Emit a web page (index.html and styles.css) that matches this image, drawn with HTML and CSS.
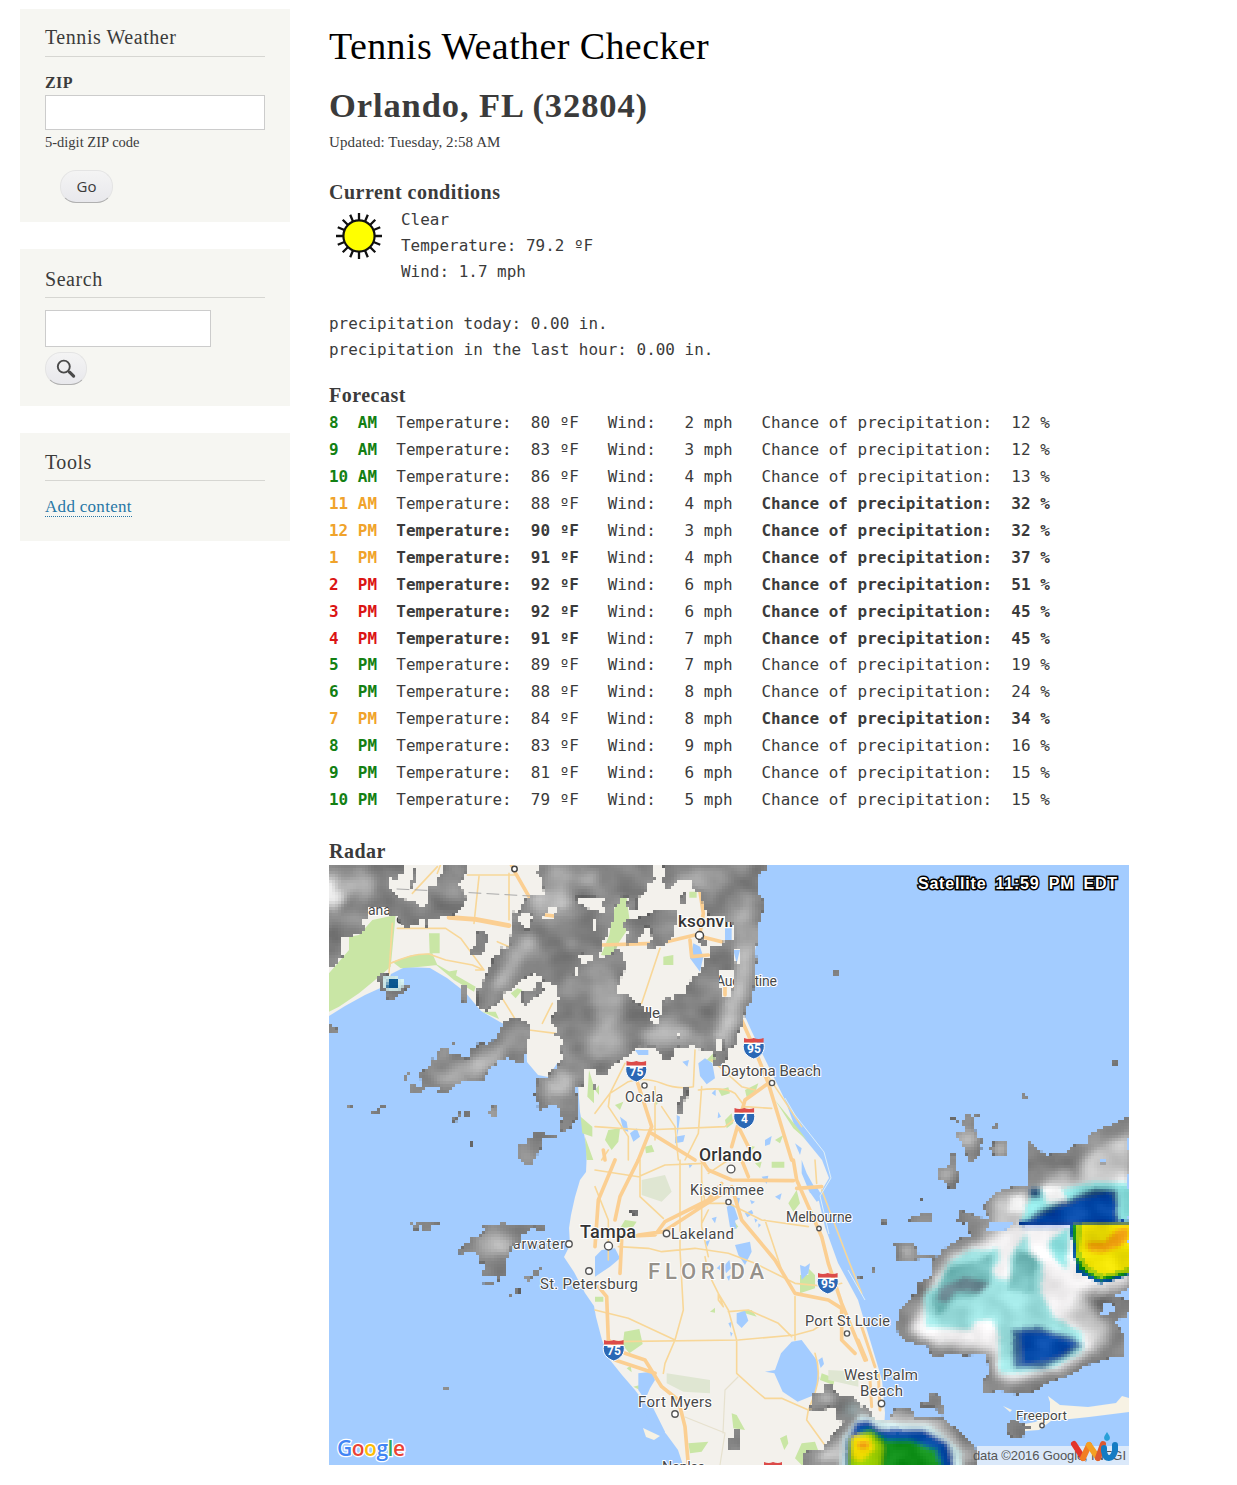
FILE: index.html
```html
<!DOCTYPE html>
<html lang="en">
<head>
<meta charset="utf-8">
<title>Tennis Weather Checker</title>
<link rel="stylesheet" href="styles.css">
</head>
<body>
<div class="page">
<aside class="sidebar">
  <section class="block block-zip">
    <h2>Tennis Weather</h2>
    <label class="zip-label" for="zip">ZIP</label>
    <input class="field" id="zip" type="text">
    <p class="hint">5-digit ZIP code</p>
    <button class="pill go" type="button">Go</button>
  </section>
  <section class="block block-search">
    <h2>Search</h2>
    <input class="field field-search" type="text" aria-label="Search">
    <button class="pill find" type="button" aria-label="Search">
      <svg width="20" height="20" viewBox="0 0 20 20" fill="none" stroke="#4a4a4a"><circle cx="7.8" cy="7.6" r="6" stroke-width="1.9"/><path d="M12 12l2 2" stroke-width="2"/><path d="M13.6 13.2l4 3.9" stroke-width="3.2" stroke-linecap="round"/></svg>
    </button>
  </section>
  <section class="block block-tools">
    <h2>Tools</h2>
    <a class="link" href="#">Add content</a>
  </section>
</aside>
<main class="content">
  <h1>Tennis Weather Checker</h1>
  <h2 class="place">Orlando, FL (32804)</h2>
  <p class="updated">Updated: Tuesday, 2:58 AM</p>
  <h3>Current conditions</h3>
  <div class="current">
    <svg class="sun" width="48" height="48" viewBox="-24 -24 48 48"><g stroke="#111" stroke-width="2.3"><path id="ray" d="M0-23V23M-23 0H23"/><use href="#ray" transform="rotate(22.5)"/><use href="#ray" transform="rotate(45)"/><use href="#ray" transform="rotate(67.5)"/></g><circle r="15.6" fill="#ff0" stroke="#111" stroke-width="2.2"/></svg>
    <div class="mono">Clear<br>Temperature: 79.2 ºF<br>Wind: 1.7 mph</div>
  </div>
  <div class="mono rain">precipitation today: 0.00 in.<br>precipitation in the last hour: 0.00 in.</div>
  <h3>Forecast</h3>
  <div class="mono forecast">
<div><b class="good">8  AM</b>  Temperature:  80 ºF   Wind:   2 mph   Chance of precipitation:  12 %</div>
<div><b class="good">9  AM</b>  Temperature:  83 ºF   Wind:   3 mph   Chance of precipitation:  12 %</div>
<div><b class="good">10 AM</b>  Temperature:  86 ºF   Wind:   4 mph   Chance of precipitation:  13 %</div>
<div><b class="fair">11 AM</b>  Temperature:  88 ºF   Wind:   4 mph   <b>Chance of precipitation:  32 %</b></div>
<div><b class="fair">12 PM</b>  <b>Temperature:  90 ºF</b>   Wind:   3 mph   <b>Chance of precipitation:  32 %</b></div>
<div><b class="fair">1  PM</b>  <b>Temperature:  91 ºF</b>   Wind:   4 mph   <b>Chance of precipitation:  37 %</b></div>
<div><b class="bad">2  PM</b>  <b>Temperature:  92 ºF</b>   Wind:   6 mph   <b>Chance of precipitation:  51 %</b></div>
<div><b class="bad">3  PM</b>  <b>Temperature:  92 ºF</b>   Wind:   6 mph   <b>Chance of precipitation:  45 %</b></div>
<div><b class="bad">4  PM</b>  <b>Temperature:  91 ºF</b>   Wind:   7 mph   <b>Chance of precipitation:  45 %</b></div>
<div><b class="good">5  PM</b>  Temperature:  89 ºF   Wind:   7 mph   Chance of precipitation:  19 %</div>
<div><b class="good">6  PM</b>  Temperature:  88 ºF   Wind:   8 mph   Chance of precipitation:  24 %</div>
<div><b class="fair">7  PM</b>  Temperature:  84 ºF   Wind:   8 mph   <b>Chance of precipitation:  34 %</b></div>
<div><b class="good">8  PM</b>  Temperature:  83 ºF   Wind:   9 mph   Chance of precipitation:  16 %</div>
<div><b class="good">9  PM</b>  Temperature:  81 ºF   Wind:   6 mph   Chance of precipitation:  15 %</div>
<div><b class="good">10 PM</b>  Temperature:  79 ºF   Wind:   5 mph   Chance of precipitation:  15 %</div>
  </div>
  <h3>Radar</h3>
  <svg class="radar" width="800" height="600" viewBox="329 865 800 600">
    <defs>
      <filter id="cells" filterUnits="userSpaceOnUse" x="329" y="865" width="800" height="600" color-interpolation-filters="sRGB">
        <feTurbulence type="fractalNoise" baseFrequency=".035 .04" numOctaves="2" seed="8" result="n"/>
        <feDisplacementMap in="SourceGraphic" in2="n" scale="3" xChannelSelector="R" yChannelSelector="G" result="d"/>
        <feColorMatrix in="n" type="matrix" values="1 0 0 0 0 1 0 0 0 0 1 0 0 0 0 0 0 0 0 1" result="g"/>
        <feComposite in="d" in2="g" operator="arithmetic" k1="0" k2="1" k3=".28" k4="-.14" result="t"/>
        <feComposite in="t" in2="d" operator="in" result="s"/>
        <feFlood x="330" y="866" width="1" height="1" flood-color="#000" result="dot"/>
        <feOffset in="dot" dx="0" dy="0" x="329" y="865" width="3" height="3" result="cell"/>
        <feTile in="cell" result="grid"/>
        <feComposite in="s" in2="grid" operator="in"/>
        <feMorphology operator="dilate" radius="1"/>
        <feComponentTransfer><feFuncA type="linear" slope="4" intercept="-1"/></feComponentTransfer>
        <feGaussianBlur stdDeviation=".6"/>
      </filter>
      <filter id="soft"><feGaussianBlur stdDeviation="14"/></filter>
      <filter id="rim"><feGaussianBlur stdDeviation="7"/></filter>
      <filter id="puff"><feGaussianBlur stdDeviation="5"/></filter>
      <filter id="mapsoft"><feGaussianBlur stdDeviation=".35"/></filter>
      <path id="storm" d="M505-60V75L430 85 390 110 370 140 390 180 300 150 285 185 325 190 330 230 300 235 245 270 235 290 170 280 165 250H100L105 305 220 295 215 350 170 370 165 400 120 450 105 510 140 545 205 560 215 590 380 585 385 645 365 665 370 700 410 690 470 705 520 695 560 670 630 645 690 610 790 590V520L765 485 820 470V420L760 410 820 380V-140L765-110 730-100 690-75V-50L650-50 620-25 560-15 530-35Z"/>
      <path id="squall" d="M-170 915V875L-115 870-95 840-60 800 0 745 50 780 85 780 100 745H150L165 775H250L320 830 350 870V915Z"/>
      <mask id="cover" maskUnits="userSpaceOnUse" x="329" y="865" width="800" height="600">
        <g transform="translate(329 860) scale(.33333)" fill="#fff">
          <path d="M0 0H180V80L190 95 210 115 265 125V135H300V80H320V60L345 40V0H415V25L400 60 390 75 400 90 415 120 390 150 370 165H335V180H300V200H285V175H265V190H240V200H225L205 175V165H180V140H120L115 180H105V210L90 225H75L60 235 35 230V270L45 290 30 300 15 325H0Z"/>
          <path d="M180 10h45v30l-15 5v13l-20 5-10-15zM252 25h10v35l-5 20h-14v-18l9-5zM0 485l28 25-8 12H0zM425 265l15-10v-30l10-15h15l5 10 10 5v20l-15 15v15l-20 8-20-5zM395 370l25 15-12 52-8-5zM142 350l20-8 30 2 30 15v12h25v12l-22 8v12l-20 5-10 10h-20l-5-20-20-8z"/>
          <path d="M630 0L625 40 640 60 645 105 605 105 580 125 575 150 550 155 555 175 545 190 550 210 540 240 545 260 525 265 510 260V285L490 290V310L475 320 480 335 465 350 460 385 440 390 445 400V440L480 455V445L510 425 520 420V400L550 390 565 370 590 360V350L605 350 610 340 625 345 640 350V365L660 365 665 375 685 385V405L690 420 680 440 685 455 670 465 668 490 685 500 680 530 700 535V550L690 560 700 570V595L690 610 680 625H660L655 650 625 655V675L615 695 620 720 630 755 660 740H690V765L700 780 692 800 700 820 725 805 728 790 745 775 750 755V720L735 685H760L765 660 770 630 798 625V645H838L840 630 858 610 880 600 908 580 935 560 965 565 995 580 998 600H1028L1035 585V565L1048 560 1128 570 1140 590 1155 615H1178L1198 590V570L1225 550 1230 510 1245 490 1248 450 1268 430 1273 400 1278 330 1285 300 1278 270 1288 230V200L1303 150V120L1288 100V70L1293 35H1318V0Z"/>
          <path d="M240 670L275 680V660L270 640 300 620 310 595 322 600 320 570 335 580 340 565H362V582H390V595H420V565L445 560V550H470L505 530 510 510 520 500V490L535 478 560 475 585 480 605 495 608 530 595 540V580L585 590 582 610H560L550 595H540L535 580 530 600H505L500 615 480 625 475 640 465 650V665H405L380 675 360 700H325L330 685 290 680 280 698H245ZM580 395h35l5-25 20-10 5 40-30 12-25 25-10-8zM475 758l10-8 5-12 15 2 3 28-15 5zM565 850h30v-15l15-5v-15l38-2v14h40v10h-48v25l-10 8-10 30h-50z"/>
          <path d="M52 731h16v14H52zM148 731h20v16h-14v14h-31v-9h20zM366 770h17v15h-17zM405 757h15v10h-15zM420 842h8v16h-8zM370 548h9v10h-9zM232 635h10v8h-10zM222 648h15v12h-15zM388 757h8v11h-8z"/>
        </g>
        <g transform="translate(595 860) scale(.33333)">
          <path d="M180 0H198V20H208V40L202 60 215 90 235 85V70H245V58H290V80L300 100H320V120L330 150 345 170 395 172V190H415V240L380 245V258H345V290L335 300 325 300V325L310 345H290L285 370 270 375V400L240 402V415L215 410 200 430 198 460 190 470V490H175V480H160V460L145 450V435L120 430 105 405H65V385L78 370 80 345 92 330 98 310 85 295V275L60 262 50 285 30 290V300H10V285L20 270V250L38 230 45 200 60 180V140L75 130 80 110H98V120L95 140 110 152H125V115L150 100H160V75L180 60 175 40Z"/>
          <path d="M-60 110H0V118L30 110V122L15 130 30 145V158H15V148H-15L-30 140-50 125ZM-220 158h25l12 10-15 25V208h-14v-10l-20-15zM-152 160l12-2-2-15 30-5 2 12-15 25h-27zM-48 285l10-4 35 5v12l-20 5-10 18-10-18zM-8 180h8v32h-8zM-60 340l5-20 5 5v20h-14zM375 327h45v25l-13 55h-25v-20l-10-5zM417 270h20l-3 40h-12zM245 518h10v14h-10zM285 555h12v30h-12zM335 575h20l5 20-20 10zM160 560h20l8 30-28-5zM360 540h25v30h-22z"/>
          <g fill="#fff"><path d="M80 195L95 180 130 180V168H155L175 150H250V190L240 200V220L220 240 210 255 185 258 182 270H160V245L170 240 168 200H150L148 220 130 235V245L92 255V235L105 215ZM258 110l5-10h12l2 15-8 15h-12zM115 75h20l8 20-18 20h-10zM310 240l10-6 16 8 2 15-18 5z"/>
          <path d="M262 678h16v35h-8l-8 47h-18v-25l12-10zM712 330h21v20h-21zM-5 675H5v12h-10z"/></g>
        </g>
        <g transform="translate(860 860) scale(.33333)" fill="#fff"><path d="M270 775h18l15 15 12-22h25v35l12 15v15h16v12l-8 10 2 13-12 32-20 6-12-25v-15l-15-10v-15l-12-10v-15h20l5-15-35-20zM345 758h14v10h-14zM398 792h18v12h-18zM400 840h45v50h-45v-12l-12-8v-10l12-3zM268 890h15v15h-15zM488 705h16v14h-16zM752 602h16v18h-16z"/></g>
        <g transform="translate(329 1160) scale(.33333)" fill="#fff"><path d="M240 189h92v7h-22v14h-32v-12h-8v11h-15v-12zM455 192H645V212H622V198L595 212V222H575V250H560L545 262V280L530 295 525 330 530 345H455V333L470 325 465 305 450 305V285L430 275 405 280V290L390 280V265L405 260V245H425V230L460 225 465 210ZM465 362h30v15h-33zM502 350h12v12h-12zM590 350h18v15h-18zM612 333h18v14h-18zM630 318h12v14h-12zM555 387h14v12h-14zM540 401h8v10h-8zM345 678h13v13h-13zM575 0h40v12h-25z"/></g>
        <g transform="translate(595 1160) scale(.33333)" fill="#fff"><path d="M100 153h26v14h-12l-6-8zM402 835h12v-26h18v26l6 5v28h-36zM655 695h30v-22h30v18l20 15h45v15l15 5v25h-15l20 25-20 10-60-2v-35l-20-10-20 12h-28l-8-8zM785 345h15v14h-15z"/></g>
        <g transform="translate(860 1160) scale(.33333)" fill="#fff">
          <use href="#storm"/><use href="#squall"/>
          <path d="M230 28l20-5 20-10V-20h20V15l-2 10 10 10v32h-13v18l-20 5v-15l-15-12-20-10zM150 165l30 5 5-12h32v32h-70zM64 177h19v14H64zM37 328h12v15H37zM184 114h8v9h-8zM205 695l20 5 20 15v15l10 10-2 30-15-10-15-20h-40v-10l20-2zM435 795l25-20 35 20h20v15h-20l-5 15-25 14-20-17zM0 740l20-3 20 30H0zM320-5h20V5h-15z"/>
          <g fill="#000"><path d="M385 190h75l-30 24h-45zM725 435l10-5 25 3 8 29h-45zM720 0h20v10h-20z"/></g>
        </g>
      </mask>
    </defs>
    <rect x="329" y="865" width="800" height="600" fill="#a3ccff"/>
    <g filter="url(#mapsoft)">
      <path fill="#f3f1ec" d="M329 865H755L757 940 743 1012 752 1032 762 1053 785 1100 795 1127 822 1160 829 1178 818 1197 825 1227 838 1263 858 1300 873 1350 882 1380 885 1413 882 1465H683L678 1450 667 1435 655 1420 652 1402 647 1406 635 1390 622 1375 610 1360 602 1340 596 1317 594 1306 585 1293 574 1272 564 1257 570 1245 569 1228 571 1215 575 1197 580 1180 586 1172 587 1150 580 1112 578 1085 560 1090 558 1062 548 1077 538 1075 527 1062 526 1035 500 1022 481 1011 465 992 447 978 430 968 405 967 391 974 387 985 365 995 345 1006 329 1016Z"/>
      <path fill="#f7f2e4" d="M1050 1402l-2-6 12 9 28 2 28-4 6-7 7 2v14l-40 5-38 4-12 9-14 1-6-6 16-3 15-6zM643 1428l17 8-6 4-8-3zM1003 1406l9 4-2 2z"/>
      <g fill="#c9e6a5" transform="translate(329 860) scale(.33333)"><path d="M130 180L200 165 190 270 185 320 150 350 90 400 30 440 0 455V340L60 270V230L90 225ZM190 305l60-20 60-5 15 35-50 5-60 5zM300 220h32v60h-30zM355 335l30-5-5 20zM310 305l130 75-5 15-60-35zM460 455h40l10 22zM545 400l20-15 15 5-20 25zM780 630l15 50v50l-20-20zM755 770l35 30v30l-30-10zM768 830l25 70h-20z"/></g>
      <g fill="#c9e6a5" transform="translate(595 860) scale(.33333)"><path d="M75 105l20 10 8 60-10 40-20 30-20 45-35-5 25-60 10-65zM205 290l30-5v30h-30zM283 95h22v18h-22zM40 810l35-5-5 40-20 25-20-30zM390 780l20-20 5 30-20 15zM450 690l40-20-10 30-25 12zM370 690l30-8 5 18-25 8zM455 855l25 5-18 20zM540 840l25-15-10 25zM540 720l65 80 30 40-40-35zM0 690l12-15V705zM60 735l25-10-10 25zM335 600l20-20 15 35zM150 860l20-5 8 20-25 5zM175 720l20-3-10 18zM180 560h35l-10 20z"/></g>
      <g fill="#c9e6a5" transform="translate(595 1160) scale(.33333)"><path d="M88 515l45-8 10 45-40 28-20-25zM615 345h25v-20l20 20v40l-45 15zM410 760l15 5 25 45-35-5zM555 835l20-10 5 25-12 20zM620 850l40-5 20 55-60 15-20-20zM700 850l25-25 5 40-30 10zM280 850l60-5-20 30-35 5zM680 640l40 15-5 20-40-15zM435 455l35-5 15 20zM580 130l25-40 10 40-20 25zM410 175l20 25-15 10zM90 180l35 5-10 15-40 5zM530 5h38v18h-38zM480 10l20-5-5 20zM345 455l15-12v15zM95 625l12-8 3 20zM115 680l20-5 10 20zM0 410h25v15H0z"/></g>
      <g fill="#dfe6d2" transform="translate(595 1160) scale(.33333)"><path d="M140 60l70-15 20 50-30 30-60-20zM215 640l130 20v40l-80-5-50-25zM700 630l90 5v45l-90-20z"/></g>
      <g fill="#a3ccff">
        <g transform="translate(595 860) scale(.33333)"><path d="M310 610l20-15 22 15 8 45-25 18-20-25zM75 770l20 15 5 30-15-5zM105 820l20-15 10 25-20 15zM240 830l30-5-5 20-25 5zM245 765l10 5-8 60zM510 840l20-12-5 25-15 5zM600 850l20 15-5 20zM370 755l8 15-10 5zM295 250l20 10 10 30-10 45-30-40zM262 605l20-5-5 20zM415 270h20l-10 40zM390 205h20v35h-20zM350 700l12-12v20zM120 570h40v15h-30z"/></g>
        <g transform="translate(595 1160) scale(.33333)"><path d="M590 545l30-5 45 60 8 55-15 50-50 20-45-30-25-55-28-5 30-5 18-50zM425 460l25-8 10 30-20 22-15-15zM395 140l20-8 15 45-10 5 5 25-20-5zM415 110l20 5-5 20zM450 160l20-10 5 10-18 12zM478 175l10 5-7 8zM420 255l45-10 5 30-20 40-20-30zM385 320l18-20 5 25-15 15zM365 325l10-10v15zM395 350l12-5-5 18zM330 245l15-5-8 20zM615 315l15 5 15-10-5 30-20 20zM0 290l20-20 40-5 15 30-30 25-45 30zM130 640l40-5 10 25-15 25-15 35-20-30zM140 740l30-5 40 80-10 15-40-50zM670 600l12-8 5 20-10 12zM620 0l15 40 25 45-15 15-25-60zM640 90l25-10 20 35-20 10zM500 50l20-3-5 25zM540 110l20-10-5 20zM350 175l15-5-5 20zM465 120l15 5-10 8zM280 10l12 5-8 10zM490 190l8 5-8 8zM400 490l10-5-3 20zM405 515l8 5-5 10z"/></g>
      </g>
      <g fill="none" stroke-linejoin="round" stroke-linecap="round">
        <g stroke="#f8d798" stroke-width="4.800">
          <g transform="translate(329 860) scale(.33333)"><path d="M325 20L250 100M450 50L435 190M415 45H560M205 205H350L395 235 465 330M185 310Q250 280 300 282L350 300 430 315 465 330M190 190L180 340M505 245L540 260M520 415L560 480M600 510L680 520M540 40V180M340 0L325 40M670 430L640 490M465 330L440 330"/></g>
          <g transform="translate(595 860) scale(.33333)"><path d="M195 265L140 430M300 570L295 680Q250 690 200 670T100 665L45 700 0 760M45 700L40 740 100 830V900M180 680V840M200 740L240 800 250 900M320 680L310 820 270 900M310 690Q390 680 420 700L450 740M530 745L450 740 430 770 390 800 150 810M150 810L0 800M40 870L20 900M90 610L45 700M350 600L440 680 480 690M520 650L620 800"/></g>
          <g transform="translate(595 1160) scale(.33333)"><path d="M255 0V270L265 450 240 540 210 610 205 640M135 0V110L205 175M0 450L100 475 240 540M60 545L430 540 600 525 655 510 700 480M70 260L160 265 200 275 300 265 400 280 480 310 600 370 700 380 740 370M330 290L340 340 370 400 400 450 425 540V640L480 690 510 715 560 715 640 750 700 730M370 400L385 440 370 420ZM400 455L460 450 550 490 590 530M600 410V540M640 750L635 780 700 870 720 915M660 580Q680 640 660 700L640 750M0 30L130 50 210 15 330 10M320 60L330 130 400 130 500 180 640 200M320 190L340 150M510 180Q530 240 560 330M320 0V200L340 290M0 80L40 180V300M660 0L665 70M340 40L400 0M680 90L760 300 800 400"/></g>
        </g>
        <path stroke="#e6e1ce" stroke-width="1.200" d="M725 1390L723 1433M725 1390L738 1377M685 1417L725 1433M725 1433L720 1465"/>
        <g stroke="#fbcf92" stroke-width="11">
          <g transform="translate(329 860) scale(.33333)"><path stroke-width="14" d="M360 172L440 178 540 197"/><path d="M540 0L560 40 600 110M650 165L690 170"/></g>
          <g transform="translate(595 860) scale(.33333)"><path d="M20 255L180 250M215 245L300 225 380 245M315 95L325 160 315 220M285 240L290 290 340 285M440 480L480 570 520 670 590 900M125 660L170 800 130 900M170 820L300 900M520 670L450 720 410 860M430 800L460 860M25 870L30 900M390 370V405"/></g>
          <g transform="translate(595 1160) scale(.33333)"><path d="M595 0L605 60 680 230 700 310 740 430 810 600M320 0L340 30 410 60 595 62M410 80L440 180 540 300 600 400 700 420 740 445M380 70L340 120 210 185 180 225 70 230M60 0L10 120 0 260M130 0L75 110 60 180M80 240L75 340M40 540L35 410 10 380M40 540L90 580 150 600 200 680 250 720 270 800 280 915M60 600L180 640M440 0L460 50M605 85L680 80M740 445V540L780 580M130 225L205 215 320 140 400 90"/></g>
        </g>
        <g stroke="#fbcf92" stroke-width="9" transform="translate(860 1160) scale(.33333)"><path d="M-5 540L20 600M5 500L45 620M55 640L60 750M30 660L35 740"/></g>
        <path stroke="#aaa" stroke-width="1" stroke-dasharray="12 6" d="M397 889L440 891 530 896"/>
      </g>
      <path fill="none" stroke="#dfeff7" stroke-width="1" d="M785 1098L795 1115 824 1152 831 1178 820 1196 829 1234M848 1270L865 1300"/>
    </g>
    <g class="labels">
      <text x="368" y="915" textLength="30" font-size="14">ahas</text>
      <text x="678" y="927" textLength="69" font-size="17" class="city">ksonville</text>
      <text x="716" y="986" textLength="61" font-size="14">Augustine</text>
      <text x="645" y="1018" textLength="15" font-size="15">lle</text>
      <text x="513" y="1249" textLength="52" font-size="14">arwater</text>
    </g>
    <g fill="#fff" stroke="#444" stroke-width="1.5"><circle cx="514.500" cy="869" r="2.700"/><circle cx="400.500" cy="920" r="3"/><circle cx="699.500" cy="935.500" r="4"/></g>
    <g filter="url(#cells)">
      <g mask="url(#cover)">
        <rect x="329" y="865" width="800" height="600" fill="#868686"/>
        <g filter="url(#puff)" fill="#a4a4a4">
          <ellipse cx="333" cy="893" rx="13" ry="16" fill="#e8e8e8"/><ellipse cx="355" cy="885" rx="22" ry="12"/><ellipse cx="450" cy="885" rx="12" ry="12" fill="#999"/>
          <ellipse cx="550" cy="900" rx="22" ry="11" fill="#c0c0c0"/><ellipse cx="572" cy="880" rx="28" ry="10"/><path d="M525 930L540 940 500 990 490 990Z" fill="#b8b8b8"/>
          <path d="M738 915L758 930 747 990 738 1020 726 1045 715 1040 733 985Z" fill="#bbb"/><ellipse cx="747" cy="920" rx="7" ry="30"/><ellipse cx="605" cy="1000" rx="16" ry="30"/><ellipse cx="665" cy="1035" rx="24" ry="13" fill="#aaa"/><ellipse cx="700" cy="880" rx="26" ry="10"/><ellipse cx="605" cy="1045" rx="18" ry="18"/>
          <ellipse cx="560" cy="1083" rx="14" ry="12" fill="#ccc"/><path d="M430 1082L455 1065 490 1052 515 1035 500 1065 465 1077Z" fill="#b5b5b5"/><ellipse cx="495" cy="1245" rx="18" ry="10" fill="#b4b4b4"/>
          <ellipse cx="968" cy="1138" rx="10" ry="8" fill="#ccc"/><ellipse cx="1000" cy="1150" rx="6" ry="6" fill="#ccc"/><ellipse cx="946" cy="1174" rx="7" ry="4" fill="#ddd"/><ellipse cx="825" cy="1398" rx="9" ry="5" fill="#ccc"/><ellipse cx="906" cy="1252" rx="8" ry="6" fill="#ccc"/><ellipse cx="852" cy="1410" rx="8" ry="5" fill="#b5cccf"/>
        </g>
        <g transform="translate(860 1160) scale(.33333)">
          <g filter="url(#soft)">
            <path fill="#c9c9c9" d="M400 110L540 80 700-30 810-80V380L700 400 750 480 740 560 600 620 500 660H410L400 570 230 560 140 510 210 390 260 290 400 220Z"/>
            <path fill="#f3f1f2" d="M180 480L215 390 240 340 265 300 370 245 480 190 620 90 810 50V370L660 390 620 460 700 560 630 620 480 660 410 650V580L300 550 170 530 150 490Z"/>
            <path fill="#aaa" d="M650 420L760 390 710 470ZM640 20L600 90 560 40Z"/>
            <path fill="#777" stroke="#777" stroke-width="14" d="M690 410h120v70L730 480ZM610 10L660 0 640 60"/>
          </g>
          <g filter="url(#rim)">
            <path fill="#9ee2e1" d="M190 400L240 370 260 310 330 270 415 265 420 300 395 330 410 355 450 360V290L500 220 510 280 550 310 540 390 580 470 670 520 670 570 590 620 480 640 420 640 415 520 400 480 350 480 330 510 200 500Z"/>
            <path fill="#74bdbc" d="M210 410L260 330 400 280 390 370 350 410 280 420 230 470ZM470 270L530 290 520 400 440 390Z"/>
            <path fill="#67858f" d="M240 380L320 350 390 370 360 400 290 395 260 430 230 420Z"/>
            <path fill="#3b6897" d="M455 505L530 500 640 530 670 555 620 590 550 625H460Z"/>
            <path fill="#0445a5" d="M480 515L550 515 650 550 600 590 490 615Z"/>
            <path fill="#8adedd" d="M500 140L520 85 620 85 700 65 810 70V190H480ZM570 240L630 200 620 330 590 300 565 260Z"/>
            <path fill="#eee" d="M548 80L605 80 620 120 560 130ZM450 110h45v50h-50z"/>
            <path fill="#29537c" d="M510 85h32v28h-32zM640 110L700 85 770 90 780 190H490L540 150Z"/>
            <path fill="#0445a5" d="M480 200L590 145 650 120 750 95 770 135 765 200Z"/>
            <path fill="#78cecc" d="M780 80H820V180H785Z"/>
          </g>
          <path fill="#eef" d="M500 192H628V200H490Z"/><path fill="#0b3f97" d="M480 182H812V193H470Z"/>
          <path fill="#07579b" d="M628 193H812V345L720 372 650 335Z"/><path fill="#108f18" d="M636 193H812V340L720 362 655 325Z"/>
          <path fill="#a5ca08" d="M645 191H812V335L720 355 675 330 650 285Z"/><path fill="#eee000" d="M665 191H812V320L730 345 680 315 660 270Z"/>
          <path filter="url(#rim)" fill="#ec9b10" d="M675 250h55l20-20 20-20 35-10v40l-30 20-50 18-35-5z"/>
          <g filter="url(#soft)"><path fill="#ccc" d="M-150 900L-60 840 0 770 100 750 240 785 350 900H0Z"/></g>
          <g filter="url(#rim)"><path fill="#d4efef" d="M-60 930L-50 830 0 765 100 790 210 795 300 870 310 930Z"/><path fill="#0445a0" d="M-45 930L-42 840-10 785 25 780 60 808H190L265 850 285 930Z"/><path fill="#078d15" d="M-38 930L-32 835 30 805 80 840 150 840 230 870 250 930Z"/><path fill="#9bcf05" d="M-30 830L35 820 70 860 60 930-30 920Z"/><path fill="#f4df00" d="M-24 825L30 830 45 870 0 905-24 890Z"/><ellipse cx="10" cy="855" rx="20" ry="12" fill="#eb930d"/></g>
        </g>
        <g filter="url(#mapsoft)"><ellipse cx="393" cy="983" rx="11" ry="8" fill="#d4efef"/><path fill="#17639c" d="M388 979h11v6l-5 4h-7z"/></g>
      </g>
    </g>
    <g class="labels">
      <text x="625" y="1102" textLength="38" font-size="14">Ocala</text><text x="721" y="1076" textLength="100" font-size="15">Daytona Beach</text>
      <text x="699" y="1161" textLength="63" font-size="17.500" class="city">Orlando</text><text x="690" y="1195" textLength="74" font-size="14.500">Kissimmee</text>
      <text x="786" y="1222" textLength="66" font-size="14">Melbourne</text><text x="580" y="1238" textLength="56" font-size="18" class="city">Tampa</text>
      <text x="671" y="1239" textLength="63" font-size="15">Lakeland</text><text x="540" y="1289" textLength="98" font-size="15">St. Petersburg</text>
      <text x="805" y="1326" textLength="85" font-size="14.500">Port St Lucie</text><text x="844" y="1380" textLength="74" font-size="15">West Palm</text>
      <text x="860" y="1396" textLength="43" font-size="15">Beach</text><text x="638" y="1407" textLength="74" font-size="15">Fort Myers</text><text x="1016" y="1420" textLength="51" font-size="13.500">Freeport</text>
      <text x="662" y="1472" textLength="43" font-size="14.500">Naples</text>
      <text x="648" y="1279" textLength="116" font-size="22" class="state">FLORIDA</text>
    </g>
    <g fill="#fff" stroke="#555" stroke-width="1.4"><circle cx="644.500" cy="1085.500" r="2.600"/><circle cx="772" cy="1083" r="2.600"/><circle cx="731" cy="1169" r="3.900"/><circle cx="728.500" cy="1202" r="2.600"/><circle cx="819" cy="1228.500" r="2.200"/><circle cx="608.500" cy="1246" r="4"/><circle cx="666.500" cy="1233.500" r="3.200"/><circle cx="569" cy="1244" r="3.200"/><circle cx="589" cy="1271" r="3.300"/><circle cx="847" cy="1333.500" r="2.600"/><circle cx="881.500" cy="1403.500" r="3.200"/><circle cx="675" cy="1414" r="3.200"/><circle cx="1042" cy="1425.500" r="2.200"/></g>
    <g class="shields">
      <g id="shield"><path fill="#2b68b5" stroke="#fff" d="M743.500 1043.500h20.500c1.500 8-3 13-10.200 15.500-7.300-2.500-11.800-7.500-10.300-15.500z"/><path fill="#dc4b49" d="M744 1038q5 2 9.800 0 4.800 2 9.800 0v4.500H744z"/></g>
      <use href="#shield" x="-117.500" y="23"/><use href="#shield" x="-9.500" y="70"/><use href="#shield" x="74" y="235"/><use href="#shield" x="-140" y="302"/>
      <text x="754" y="1053">95</text><text x="636.500" y="1076">75</text><text x="744.500" y="1123">4</text><text x="828" y="1288">95</text><text x="614" y="1355">75</text>
      <path fill="#dc4b49" d="M764 1462q5 2 9 0 5 2 9 0v3h-18z"/>
    </g>
    <rect x="977" y="1446" width="152" height="19" fill="#eef3f8" opacity=".75"/>
    <text x="973" y="1460" textLength="153" font-size="13" class="credit">data ©2016 Google, INEGI</text>
    <g fill="none" stroke-linecap="round" stroke-width="6"><path stroke="#e3352c" d="M1074 1444l9 14"/><path stroke="#f27d24" d="M1083 1458l6-13"/><path stroke="#f4a023" d="M1089 1445l9 13"/><path stroke="#dd5830" d="M1098 1458l5-14"/><path stroke="#147bc3" d="M1104 1448v3q1 7 5 7t6-7v-6"/></g><path fill="#2aa0d8" d="M1107 1432q6 8 0 9-6-1 0-9z"/>
    <text x="337" y="1456" textLength="68" class="google"><tspan fill="#4285f4">G</tspan><tspan fill="#ea4335">o</tspan><tspan fill="#fbbc05">o</tspan><tspan fill="#4285f4">g</tspan><tspan fill="#34a853">l</tspan><tspan fill="#ea4335">e</tspan></text>
    <text x="918" y="889" textLength="199" class="stamp">Satellite 11:59 PM EDT</text>
  </svg>
</main>
</div>
</body>
</html>
```
FILE: styles.css
```css
* { box-sizing: border-box; }
body { margin: 0; background: #fff; color: #3b3b3b; font-family: "Liberation Serif", serif; }
h1, h2, h3, p { margin: 0; font-weight: normal; }
.page { display: flex; gap: 39px; padding: 9px 0 20px 20px; }
.sidebar { width: 270px; display: flex; flex-direction: column; gap: 27px; align-items: stretch; }
.block { background: #f6f6f2; padding: 15px 25px 0; display: flex; flex-direction: column; align-items: flex-start; }
.block-zip { height: 213px; }
.block-search { height: 157px; padding-top: 17px; }
.block-tools { height: 108px; padding-top: 16px; }
.block h2 { width: 100%; height: 33px; line-height: 27px; font-size: 20px; letter-spacing: .55px; border-bottom: 1px solid #d6d6d2; flex: none; }
.block-search h2, .block-tools h2 { height: 32px; }
.zip-label { margin-top: 16px; line-height: 20px; font-size: 16px; font-weight: bold; letter-spacing: .4px; height: 22px; }
.field { width: 220px; height: 35px; border: 1px solid #ccc; background: #fff; padding: 0; border-radius: 0; }
.field-search { width: 166px; height: 37px; margin-top: 12px; }
.hint { font-size: 14.5px; line-height: 18px; margin-top: 3px; }
.pill { height: 33px; border: 1px solid #e4e4e4; border-bottom-color: #b0b0b0; border-radius: 16px; background: linear-gradient(#f4f4f4, #e8e8ec); color: #3a3a3a; padding: 0; display: flex; align-items: center; justify-content: center; }
.go { width: 53px; margin: 19px 0 0 15px; padding-bottom: 2px; font: 15px "Open Sans", sans-serif; }
.find { width: 42px; margin-top: 5px; }
.link { margin-top: 16px; font-size: 17px; line-height: 19px; letter-spacing: .3px; color: #2777a6; text-decoration: none; border-bottom: 1px dotted #2777a6; }
.content { width: 800px; }
h1 { font-size: 38px; letter-spacing: .4px; line-height: 44px; color: #000; margin-top: 15px; }
.place { font-size: 34.5px; letter-spacing: .9px; line-height: 40px; font-weight: bold; margin-top: 17px; }
.updated { font-size: 15px; letter-spacing: .1px; line-height: 20px; margin-top: 7px; }
h3 { font-size: 20px; letter-spacing: .5px; line-height: 24px; padding-bottom: 2px; font-weight: bold; }
.updated + h3 { margin-top: 28px; }
.mono { font: 15.95px/26px "DejaVu Sans Mono", monospace; letter-spacing: .015px; padding-top: 1px; margin-bottom: -1px; }
.current { display: flex; padding-left: 6px; gap: 18px; }
.sun { margin-top: 6px; }
.rain { margin-top: 26px; }
.rain + h3 { margin-top: 21px; }
.forecast { white-space: pre; line-height: 26.93px; height: 404px; margin-bottom: 0; display: flex; flex-direction: column; }
.forecast > div { flex: none; }
.forecast + h3 { margin-top: 26px; }
.good { color: #138013; }
.fair { color: #f0a32b; }
.bad { color: #db1414; }
.radar { display: block; overflow: hidden; }
.labels { font-family: Roboto, sans-serif; fill: #484848; stroke: #fff; stroke-width: 2px; paint-order: stroke; }
.city { font-weight: 500; fill: #333; }
.state { font-weight: 500; fill: #96918a; }
.shields { font: bold 12px Roboto, sans-serif; text-anchor: middle; }
.shields text { fill: #fff; }
.credit { font-family: "Liberation Sans", sans-serif; fill: #555; }
.google { font: 600 21px "Open Sans", sans-serif; stroke: #fff; stroke-width: 2.5px; paint-order: stroke; }
.stamp { font: bold 16px "Liberation Sans", sans-serif; fill: #fff; stroke: #000; stroke-width: 3px; paint-order: stroke; white-space: pre; word-spacing: 4px; }
```
